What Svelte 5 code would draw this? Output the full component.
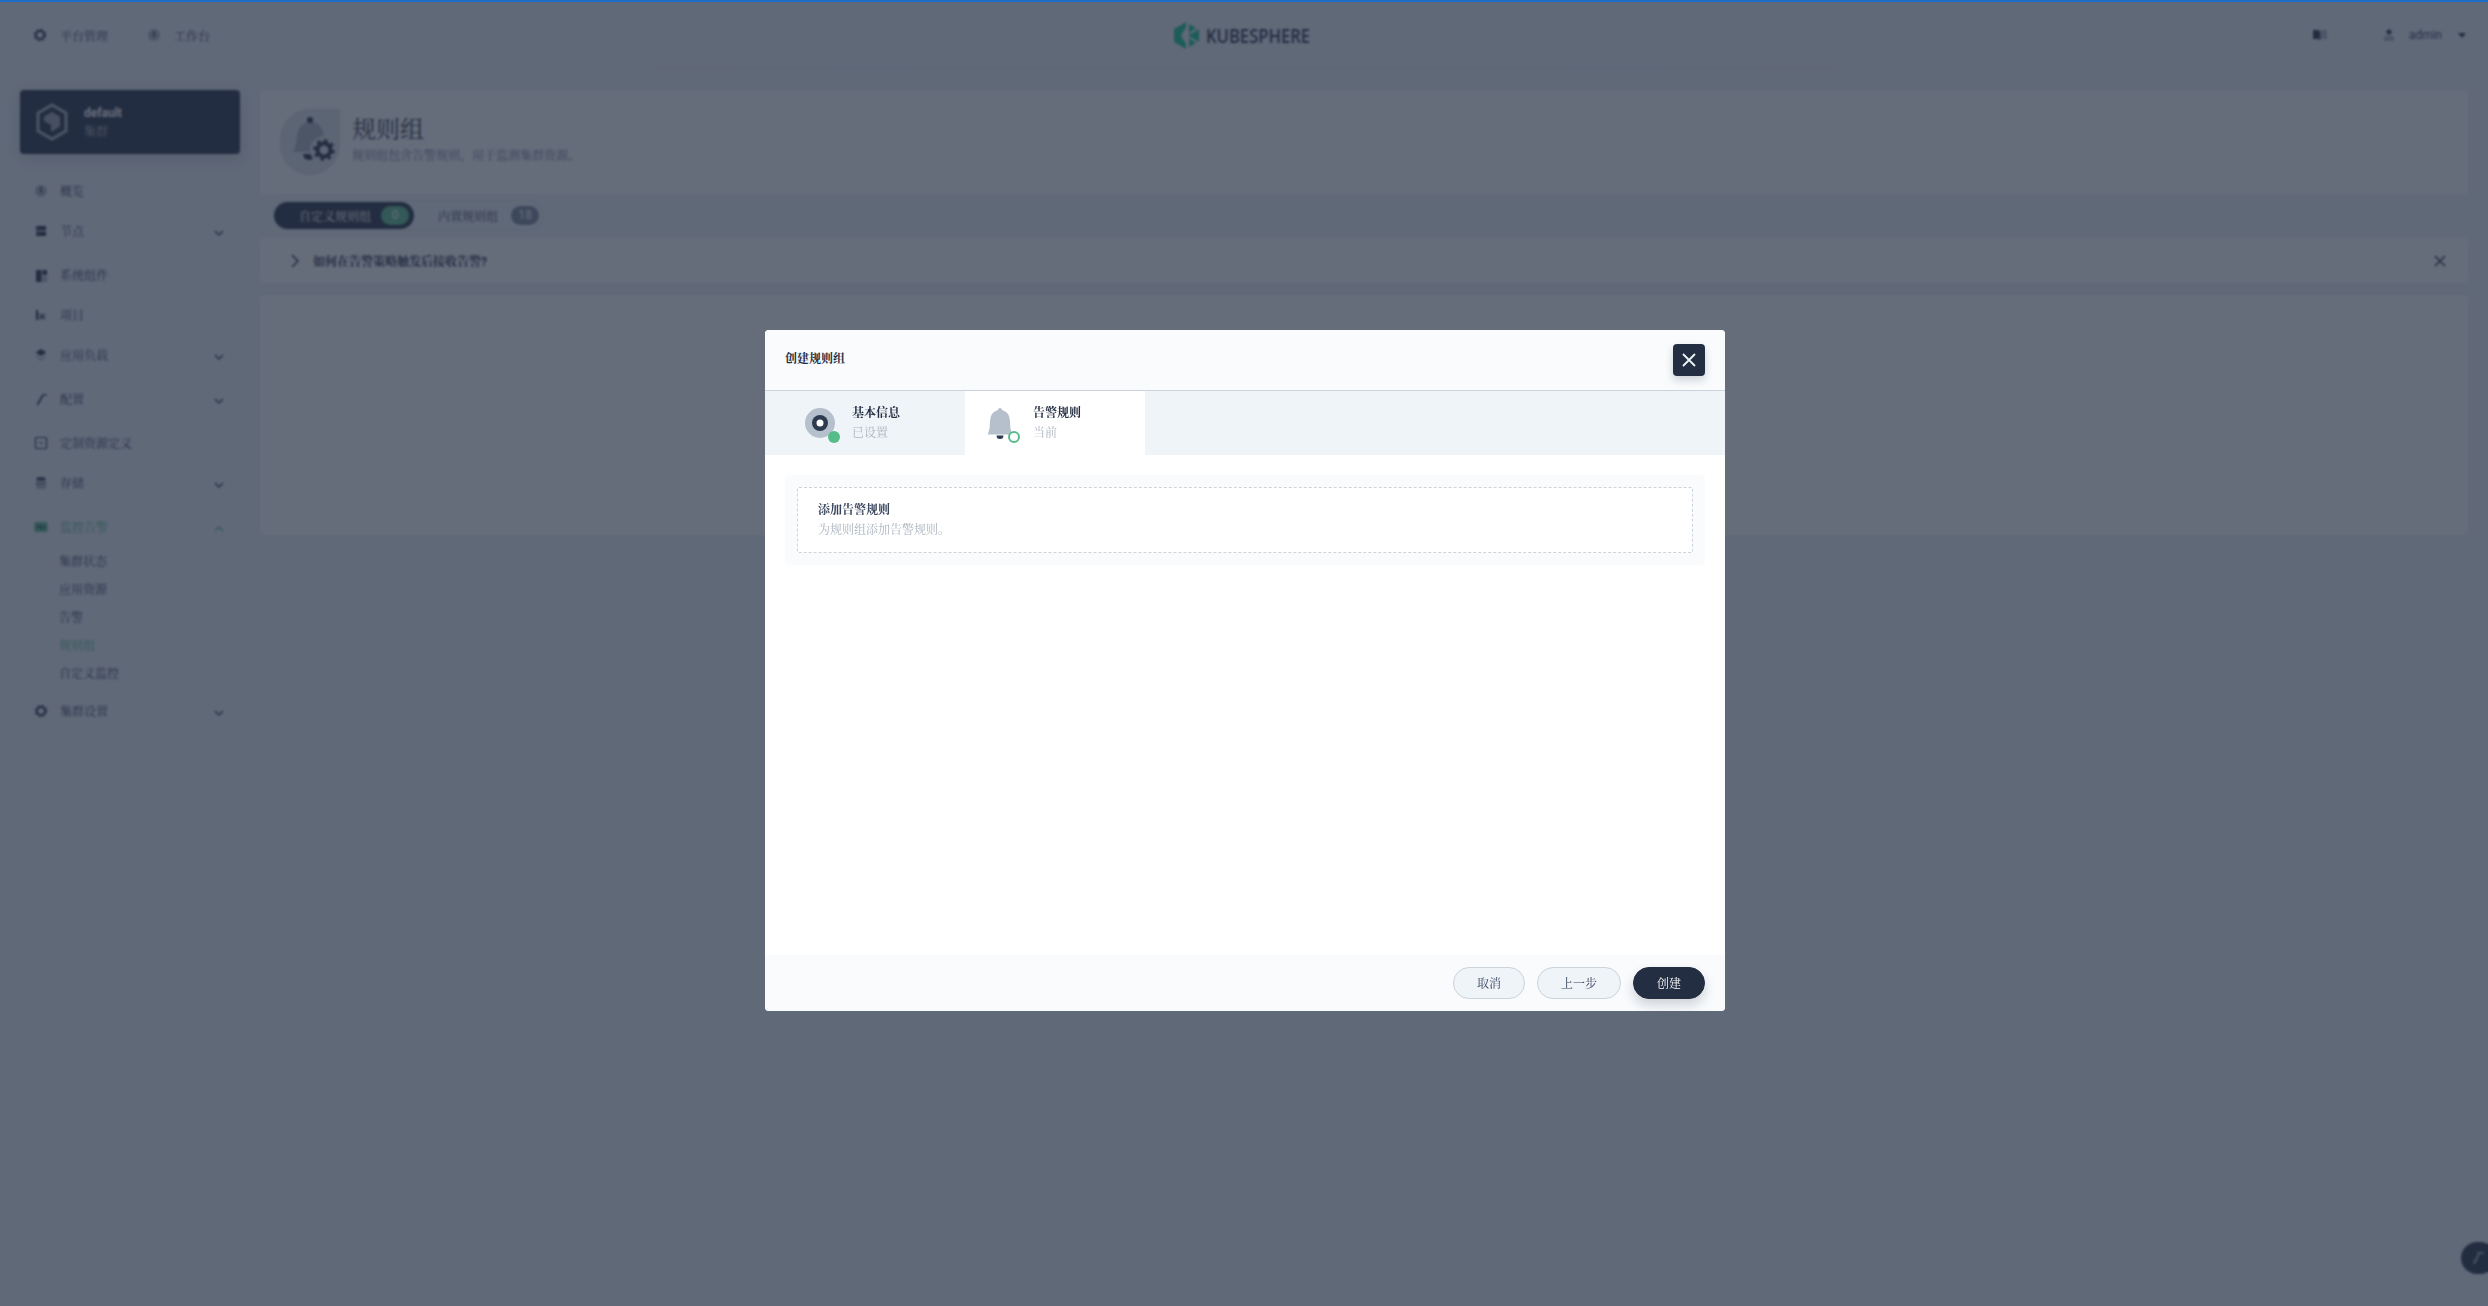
<script>
  const icons = {
    gear: `<circle cx="8" cy="8" r="4" fill="none" stroke="#242e42" stroke-width="2"/><circle cx="8" cy="8" r="5.6" fill="none" stroke="#242e42" stroke-width="1.4" stroke-dasharray="2.2 2.2"/>`,
    dash: `<circle cx="8" cy="8" r="6" fill="#abb4be"/><path d="M7.6 3.500h.8l.4 5a.9.9 0 1 1-1.600 0z" fill="#242e42"/>`,
    nodes: `<rect x="3" y="3" width="10" height="4.4" fill="#242e42"/><rect x="3" y="8.6" width="10" height="4.4" fill="#242e42"/><path d="M4 5h1M4 10.8h1" stroke="#eff4f9"/>`,
    comp: `<rect x="3" y="3" width="5.6" height="12" fill="#242e42"/><rect x="9.6" y="3" width="4.4" height="5" fill="#242e42"/><rect x="9.6" y="9" width="4.4" height="6" fill="#abb4be"/>`,
    proj: `<rect x="3" y="3" width="2" height="10" fill="#242e42"/><rect x="5" y="6" width="8" height="7" fill="#abb4be"/><path d="M9 7l2 4H7z" fill="#242e42"/>`,
    layers: `<path d="M8 2l5.5 3.5L8 9 2.500 5.500z" fill="#242e42"/><path d="M3.500 8.500L8 11.500l4.500-3 1 .7L8 14 2.500 9.200z" fill="#abb4be"/>`,
    hammer: `<path d="M9.500 3h3.500l1 2-3.200-.5L5 14.500 3.500 13.600z" fill="#242e42"/><path d="M9.500 3l3 1.500-1.700.5z" fill="#abb4be"/>`,
    crd: `<rect x="2.500" y="2.500" width="11" height="11" rx="1" fill="none" stroke="#242e42" stroke-width="1.200"/><path d="M6 7l2 2 2-2" fill="none" stroke="#242e42"/>`,
    db: `<rect x="3" y="2" width="10" height="12" rx="2.500" fill="#abb4be"/><ellipse cx="8" cy="3.800" rx="4.500" ry="1.600" fill="#242e42"/><path d="M3 8.500h10" stroke="#5f6778"/>`,
    monitor: `<rect x="1.500" y="3" width="13" height="10" rx="1" fill="#55bc8a"/><path d="M3 8h3l1-2 1.500 4L10 7l.7 1H13" fill="none" stroke="#242e42" stroke-width="1"/>`
  };

  const nav = [
    { label: "概览", icon: "dash", h: 40 },
    { label: "节点", icon: "nodes", h: 44, arrow: true },
    { label: "系统组件", icon: "comp", h: 40 },
    { label: "项目", icon: "proj", h: 40 },
    { label: "应用负载", icon: "layers", h: 44, arrow: true },
    { label: "配置", icon: "hammer", h: 44, arrow: true },
    { label: "定制资源定义", icon: "crd", h: 40 },
    { label: "存储", icon: "db", h: 44, arrow: true },
    { label: "监控告警", icon: "monitor", h: 41, arrow: true, open: true,
      children: ["集群状态", "应用资源", "告警", "规则组", "自定义监控"] },
    { label: "集群设置", icon: "gear", h: 44, arrow: true }
  ];
</script>

<div class="page">
  <header class="topbar">
    <div class="topnav">
      <span class="topitem"><svg class="ico" viewBox="0 0 16 16">{@html icons.gear}</svg>平台管理</span>
      <span class="topitem"><svg class="ico" viewBox="0 0 16 16">{@html icons.dash}</svg>工作台</span>
    </div>
    <div class="logo">
      <svg width="25" height="27" viewBox="0 0 25 27">
        <path d="M12 0L0 7v13l12 7v-5L7 13.500 12 5z" fill="#10c890" />
        <path d="M25 7v13l-11-6.500z" fill="#10c890" />
        <path d="M15 2l7 4-7 5zM15 25l7-4-7-5z" fill="#10c890" />
      </svg>
      <span class="logotext">KUBESPHERE</span>
    </div>
    <div class="topright">
      <svg class="book" viewBox="0 0 14 10"><path d="M0 0h5l2 1v9l-2-1H0z" fill="#242e42" /><path d="M7 1l2-1h5v9H9l-2 1z" fill="#abb4be" /></svg>
      <svg class="usericon" viewBox="0 0 10 12"><circle cx="5" cy="3" r="2.500" fill="#242e42" /><path d="M0 12V9q0-2 2-2h6q2 0 2 2v3z" fill="#abb4be" /></svg>
      <span class="username">admin</span>
      <span class="caret"></span>
    </div>
  </header>

  <div class="body">
    <aside class="sidebar">
      <div class="cluster">
        <svg width="32" height="38" viewBox="0 0 32 38">
          <path d="M16 2l14 8v18l-14 8-14-8V10z" fill="none" stroke="#abb4be" stroke-width="3" />
          <path d="M16 9l8 4.600v10L16 28.500l-8-4.900v-10z" fill="#abb4be" opacity="0.85" />
          <path d="M8 18l7 4v6.500l-7-4.500z" fill="#242e42" />
        </svg>
        <div>
          <div class="cname">default</div>
          <div class="ctype">集群</div>
        </div>
      </div>

      <nav class="menu">
        {#each nav as item}
          <div class="row" class:open={item.open} style="height: {item.h}px">
            <svg class="ico" viewBox="0 0 16 16">{@html icons[item.icon]}</svg>
            <span class="rowlabel">{item.label}</span>
            {#if item.arrow}
              <svg class="chev" viewBox="0 0 10 6">
                <path d={item.open ? "M1 5l4-4 4 4" : "M1 1l4 4 4-4"} fill="none" stroke="currentColor" stroke-width="1.400" />
              </svg>
            {/if}
          </div>
          {#if item.children}
            <div class="sub">
              {#each item.children as c}
                <div class="subrow" class:on={c === "规则组"}>{c}</div>
              {/each}
            </div>
          {/if}
        {/each}
      </nav>
    </aside>

    <main class="main">
      <section class="banner">
        <div class="bannericon">
          <svg width="60" height="66" viewBox="0 0 60 66">
            <path d="M30 0h30v36a30 30 0 0 1-60 0V30A30 30 0 0 1 30 0z" fill="#e1e6ec" />
            <path d="M30 8q3 0 3 3v2q10 3 11 14l1 8 3 8H13l3-8 1-8q1-11 11-14v-2q0-3 2-3z" fill="#abb4be" />
            <circle cx="30" cy="11" r="3" fill="#242e42" />
            <path d="M23 45h12a6 6 0 0 1-12 0z" fill="#242e42" />
            <circle cx="44" cy="41" r="14" fill="#e1e6ec" />
            <circle cx="44" cy="41" r="6.500" fill="none" stroke="#242e42" stroke-width="4" />
            <circle cx="44" cy="41" r="9.500" fill="none" stroke="#242e42" stroke-width="2.600" stroke-dasharray="3.600 3.800" />
          </svg>
        </div>
        <div class="bannertext">
          <h1>规则组</h1>
          <p>规则组包含告警规则，用于监测集群资源。</p>
        </div>
      </section>

      <div class="tabsbar">
        <div class="tabs">
          <span class="tab active">自定义规则组<em class="count green">0</em></span>
          <span class="tab">内置规则组<em class="count">18</em></span>
        </div>
      </div>

      <div class="tip">
        <svg class="tiparrow" viewBox="0 0 8 14"><path d="M1 1l6 6-6 6" fill="none" stroke="#242e42" stroke-width="1.500" /></svg>
        <span>如何在告警策略触发后接收告警?</span>
        <svg class="tipclose" viewBox="0 0 12 12"><path d="M1 1l10 10M11 1L1 11" stroke="#242e42" stroke-width="1.500" /></svg>
      </div>

      <section class="tablecard"></section>
    </main>
  </div>

  <div class="fab">
    <svg width="16" height="16" viewBox="0 0 16 16"><path d="M8 2h6l1 2-4-.5L6 14l-2-1 5-9z" fill="#abb4be" /></svg>
  </div>
</div>

<div class="overlay">
  <div class="modal">
    <div class="mhead">
      <span class="mtitle">创建规则组</span>
      <button class="close" aria-label="关闭">
        <svg width="14" height="14" viewBox="0 0 14 14"><path d="M1 1l12 12M13 1L1 13" stroke="#eff4f9" stroke-width="1.800" /></svg>
      </button>
    </div>

    <div class="steps">
      <div class="step done">
        <span class="stepicon">
          <svg width="30" height="30" viewBox="0 0 30 30">
            <circle cx="15" cy="15" r="15" fill="#b6c0cc" />
            <circle cx="15" cy="15" r="8" fill="#2d3a50" />
            <circle cx="15" cy="15" r="3.500" fill="#fff" />
          </svg>
          <i class="dot"></i>
        </span>
        <div class="steptext">
          <div class="steptitle">基本信息</div>
          <div class="stepsub">已设置</div>
        </div>
      </div>
      <div class="step current">
        <span class="stepicon">
          <svg class="stepbell" viewBox="0 0 30 34" preserveAspectRatio="none">
            <path d="M15 2q2 0 2.500 2q8.500 2 9 11l.5 7 2 6.500H1L3 22l.5-7q.5-9 9-11Q13 2 15 2z" fill="#b6c0cc" />
            <path d="M11 29.500h8a4 3.500 0 0 1-8 0z" fill="#2d3a50" />
          </svg>
          <i class="dot ring"></i>
        </span>
        <div class="steptext">
          <div class="steptitle">告警规则</div>
          <div class="stepsub">当前</div>
        </div>
      </div>
    </div>

    <div class="mbody">
      <div class="panel">
        <div class="addbox">
          <div class="addtitle">添加告警规则</div>
          <div class="addsub">为规则组添加告警规则。</div>
        </div>
      </div>
    </div>

    <div class="mfoot">
      <button class="btn">取消</button>
      <button class="btn wide">上一步</button>
      <button class="btn primary">创建</button>
    </div>
  </div>
</div>

<div class="loadbar"></div>

<style>
  :global(body) {
    margin: 0;
    background: #eff4f9;
    font-family: Roboto, "Noto Serif CJK SC", "Noto Sans CJK SC", serif;
    font-size: 12px;
    color: #242e42;
  }

  .page {
    height: 1306px;
    overflow: hidden;
    display: flex;
    flex-direction: column;
  }

  .topbar {
    height: 68px;
    padding-top: 2px;
    display: grid;
    grid-template-columns: 1fr auto 1fr;
    align-items: center;
    flex: none;
    box-sizing: border-box;
    background: linear-gradient(90deg, transparent 15%, #dde3ea 50%, transparent 85%) bottom / 100% 1px no-repeat;
  }

  .topnav {
    display: flex;
    padding-left: 32px;
    gap: 38px;
  }

  .topitem {
    display: flex;
    align-items: center;
    gap: 12px;
    color: #36435c;
  }

  .ico {
    width: 16px;
    height: 16px;
    flex: none;
  }

  .logo {
    display: flex;
    align-items: center;
    gap: 7px;
    margin-right: 6px;
  }

  .logotext {
    font-family: "Open Sans", sans-serif;
    font-size: 20px;
    font-weight: 600;
    color: #242e42;
    transform: scaleX(0.83);
    transform-origin: left;
    width: 102px;
    white-space: nowrap;
  }

  .topright {
    display: flex;
    align-items: center;
    justify-content: flex-end;
    padding-right: 22px;
  }

  .book {
    width: 14px;
    height: 10px;
    margin-right: 57px;
  }

  .usericon {
    width: 10px;
    height: 12px;
    margin-right: 15px;
  }

  .username {
    color: #36435c;
    margin-right: 16px;
  }

  .caret {
    width: 0;
    height: 0;
    border: 4px solid transparent;
    border-top: 5px solid #242e42;
    border-bottom: 0;
  }

  .body {
    flex: 1;
    display: flex;
    padding: 22px 20px 0;
    gap: 20px;
  }

  .sidebar {
    width: 220px;
    flex: none;
  }

  .cluster {
    height: 64px;
    background: #242e42;
    border-radius: 4px;
    box-shadow: 0 4px 16px rgba(35, 45, 65, 0.2);
    display: flex;
    align-items: center;
    padding-left: 16px;
    gap: 16px;
    box-sizing: border-box;
  }

  .cname {
    color: #fff;
    font-weight: 700;
    line-height: 18px;
    margin-top: 1px;
  }

  .ctype {
    color: #abb4be;
    line-height: 20px;
  }

  .menu {
    margin-top: 17px;
  }

  .row {
    display: flex;
    align-items: flex-start;
    padding: 12px 0 0 13px;
    box-sizing: border-box;
    gap: 11px;
    line-height: 17px;
    color: #36435c;
  }

  .rowlabel {
    flex: 1;
    padding-top: 1px;
  }

  .chev {
    width: 10px;
    height: 6px;
    margin: 7px 16px 0 0;
    color: #242e42;
  }

  .row.open {
    color: #55bc8a;
  }

  .row.open .chev {
    color: #55bc8a;
  }

  .sub {
    padding-bottom: 3px;
  }

  .subrow {
    height: 28px;
    line-height: 29px;
    padding-left: 39px;
    color: #36435c;
  }

  .subrow.on {
    color: #55bc8a;
  }

  .main {
    flex: 1;
    min-width: 0;
  }

  .banner {
    height: 104px;
    background: #fff;
    border-radius: 4px 4px 0 0;
    display: flex;
    align-items: center;
    box-sizing: border-box;
    padding: 0 0 0 20px;
    gap: 12px;
  }

  .bannericon {
    height: 66px;
  }

  .bannertext {
    padding-bottom: 4px;
  }

  h1 {
    margin: 0;
    font-size: 24px;
    font-weight: 400;
    line-height: 32px;
  }

  .banner p {
    margin: 0;
    color: #79879c;
    line-height: 20px;
  }

  .tabsbar {
    height: 44px;
    padding: 6px 0 0 12px;
    box-sizing: border-box;
  }

  .tabs {
    display: inline-flex;
    height: 31px;
    border: 1px solid #dde3ea;
    border-radius: 16px;
    box-sizing: border-box;
    width: 272px;
    padding: 1px;
    align-items: stretch;
  }

  .tab {
    display: flex;
    align-items: center;
    justify-content: space-between;
    border-radius: 14px;
    padding: 0 3px 0 24px;
    color: #36435c;
    width: 128px;
    box-sizing: border-box;
  }

  .tab.active {
    background: #242e42;
    color: #fff;
    width: 140px;
    padding: 0 5px 0 25px;
  }

  .count {
    font-style: normal;
    min-width: 28px;
    height: 19px;
    line-height: 19px;
    border-radius: 10px;
    background: #79879c;
    color: #fff;
    text-align: center;
  }

  .count.green {
    background: #55bc8a;
  }

  .tip {
    height: 45px;
    background: #fff;
    border-radius: 4px;
    display: flex;
    align-items: center;
    padding: 0 22px 0 31px;
    font-weight: 700;
  }

  .tip span {
    flex: 1;
    margin-left: 14px;
  }

  .tiparrow {
    width: 8px;
    height: 14px;
  }

  .tipclose {
    width: 12px;
    height: 12px;
  }

  .tablecard {
    margin-top: 12px;
    height: 240px;
    background: #fff;
    border-radius: 4px;
  }

  .fab {
    position: fixed;
    right: -8px;
    top: 1242px;
    width: 35px;
    height: 32px;
    background: #242e42;
    border-radius: 16px;
    display: flex;
    align-items: center;
    padding-left: 8px;
    box-sizing: border-box;
  }

  .overlay {
    position: fixed;
    inset: 0;
    background: rgba(35, 45, 65, 0.7);
    backdrop-filter: blur(1px);
    display: flex;
    justify-content: center;
    padding-top: 330px;
    box-sizing: border-box;
  }

  .loadbar {
    position: fixed;
    left: 0;
    right: 0;
    top: 0;
    height: 2px;
    background: #1c6cc8;
  }

  .modal {
    width: 960px;
    height: 681px;
    margin-left: 2px;
    background: #fff;
    border-radius: 4px;
    display: flex;
    flex-direction: column;
    overflow: hidden;
  }

  .mhead {
    height: 61px;
    flex: none;
    box-sizing: border-box;
    background: #f9fbfd;
    border-bottom: 1px solid #ccd3db;
    display: flex;
    align-items: center;
    justify-content: space-between;
    padding: 0 20px;
  }

  .mtitle {
    font-weight: 700;
    margin-top: -5px;
  }

  .close {
    width: 32px;
    height: 32px;
    border: 0;
    padding: 0;
    border-radius: 4px;
    background: #242e42;
    display: flex;
    align-items: center;
    justify-content: center;
    box-shadow: 0 4px 8px rgba(35, 45, 65, 0.2);
  }

  .steps {
    height: 64px;
    flex: none;
    background: #eff4f9;
    display: flex;
  }

  .step {
    display: flex;
    align-items: center;
    box-sizing: border-box;
  }

  .step.done {
    width: 200px;
    padding-left: 40px;
    gap: 17px;
  }

  .step.current {
    width: 180px;
    padding-left: 20px;
    gap: 18px;
    background: #fff;
  }

  .stepicon {
    position: relative;
    display: flex;
    width: 30px;
  }

  .stepbell {
    width: 26px;
    height: 34px;
    margin-left: 2px;
  }

  .steptext {
    margin-top: -1px;
  }

  .dot {
    position: absolute;
    right: -5px;
    bottom: -5px;
    width: 12px;
    height: 12px;
    border-radius: 50%;
    background: #55bc8a;
    box-sizing: border-box;
  }

  .dot.ring {
    right: -5px;
    bottom: -3px;
    background: #fff;
    border: 2px solid #55bc8a;
  }

  .steptitle {
    font-weight: 700;
    line-height: 20px;
  }

  .stepsub {
    color: #abb4be;
    line-height: 20px;
  }

  .mbody {
    flex: 1;
    padding: 20px;
  }

  .panel {
    background: #f9fbfd;
    border-radius: 4px;
    padding: 12px;
    height: 90px;
    box-sizing: border-box;
  }

  .addbox {
    height: 66px;
    box-sizing: border-box;
    border: 1px dashed #ccd3db;
    background: #fff;
    border-radius: 2px;
    padding: 12px 20px;
  }

  .addtitle {
    font-weight: 700;
    line-height: 20px;
    color: #36435c;
  }

  .addsub {
    line-height: 20px;
    color: #abb4be;
  }

  .mfoot {
    height: 56px;
    flex: none;
    background: #f9fbfd;
    display: flex;
    justify-content: flex-end;
    align-items: flex-start;
    gap: 12px;
    padding: 12px 20px 0;
    box-sizing: border-box;
  }

  .btn {
    width: 72px;
    height: 32px;
    border-radius: 16px;
    border: 1px solid #ccd3db;
    background: #eff4f9;
    color: #36435c;
    font: inherit;
    padding: 0 0 2px;
  }

  .btn.wide {
    width: 84px;
  }

  .btn.primary {
    background: #242e42;
    border-color: #242e42;
    color: #fff;
    box-shadow: 0 6px 12px rgba(35, 45, 65, 0.2);
  }
</style>
